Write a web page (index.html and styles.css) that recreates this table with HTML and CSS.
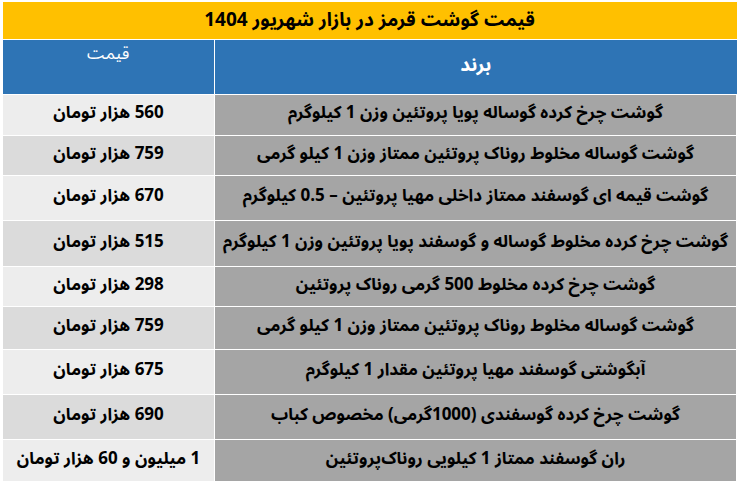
FILE: index.html
```html
<!DOCTYPE html>
<html lang="fa" dir="rtl">
<head>
<meta charset="utf-8">
<link rel="stylesheet" href="styles.css">
</head>
<body>
<table class="price-table">
  <colgroup><col class="col-brand"><col class="col-price"></colgroup>
  <thead>
    <tr class="title-row"><th colspan="2">قیمت گوشت قرمز در بازار شهریور 1404</th></tr>
    <tr class="head-row"><th class="brand-head">برند</th><th class="price-head">قیمت</th></tr>
  </thead>
  <tbody>
    <tr class="r1"><td class="brand">گوشت چرخ کرده گوساله پویا پروتئین وزن 1 کیلوگرم</td><td class="price">560 هزار تومان</td></tr>
    <tr class="r2"><td class="brand">گوشت گوساله مخلوط روناک پروتئین ممتاز وزن 1 کیلو گرمی</td><td class="price alt">759 هزار تومان</td></tr>
    <tr class="r3"><td class="brand">گوشت قیمه ای گوسفند ممتاز داخلی مهیا پروتئین – 0.5 کیلوگرم</td><td class="price">670 هزار تومان</td></tr>
    <tr class="r4"><td class="brand">گوشت چرخ کرده مخلوط گوساله و گوسفند پویا پروتئین وزن 1 کیلوگرم</td><td class="price alt">515 هزار تومان</td></tr>
    <tr class="r5"><td class="brand">گوشت چرخ کرده مخلوط 500 گرمی روناک پروتئین</td><td class="price">298 هزار تومان</td></tr>
    <tr class="r6"><td class="brand">گوشت گوساله مخلوط روناک پروتئین ممتاز وزن 1 کیلو گرمی</td><td class="price alt">759 هزار تومان</td></tr>
    <tr class="r7"><td class="brand">آبگوشتی گوسفند مهیا پروتئین مقدار 1 کیلوگرم</td><td class="price">675 هزار تومان</td></tr>
    <tr class="r8"><td class="brand">گوشت چرخ کرده گوسفندی (1000گرمی) مخصوص کباب</td><td class="price alt">690 هزار تومان</td></tr>
    <tr class="r9"><td class="brand">ران گوسفند ممتاز 1 کیلویی روناک‌پروتئین</td><td class="price">1 میلیون و 60 هزار تومان</td></tr>
  </tbody>
</table>
</body>
</html>
```
FILE: styles.css
```css
html, body {
  margin: 0;
  padding: 0;
  background: #ffffff;
}
body {
  padding: 2px 3px 0 3px;
  font-family: "Noto Sans Arabic", "DejaVu Sans", sans-serif;
  color: #000000;
}
.price-table {
  width: 734px;
  border-collapse: collapse;
  table-layout: fixed;
}
.col-brand { width: 522px; }
.col-price { width: 212px; }
.price-table th,
.price-table td {
  border: 1px solid #ffffff;
  padding: 0 0 4px 0;
  text-align: center;
  font-size: 17px;
  line-height: 24px;
  white-space: nowrap;
}
.title-row th {
  background: #ffc000;
  height: 35px;
  padding: 0 0 2px 0;
  font-size: 19px;
  line-height: 32px;
  font-weight: bold;
  border-top: none;
  border-left: none;
  border-right: none;
}
.head-row th {
  background: #2e74b5;
  color: #ffffff;
  font-weight: bold;
}
.head-row .brand-head {
  font-size: 19px;
  border-right: none;
  height: 50px;
}
.head-row .price-head {
  vertical-align: top;
  padding-top: 4px;
  height: 46px;
  font-weight: normal;
  font-size: 17px;
  line-height: 20px;
  border-left: none;
}
.brand {
  background: #a5a5a5;
  font-weight: bold;
  border-right: none;
}
.price {
  background: #ededed;
  font-weight: bold;
  border-left: none;
}
.price.alt {
  background: #dbdbdb;
}
.r1 td { height: 36px; }
.r2 td { height: 35px; }
.r3 td { height: 40px; }
.r4 td { height: 41px; }
.r5 td { height: 35px; }
.r6 td { height: 38px; }
.r7 td { height: 40px; }
.r8 td { height: 40px; }
.r9 td { height: 37px; }
```
